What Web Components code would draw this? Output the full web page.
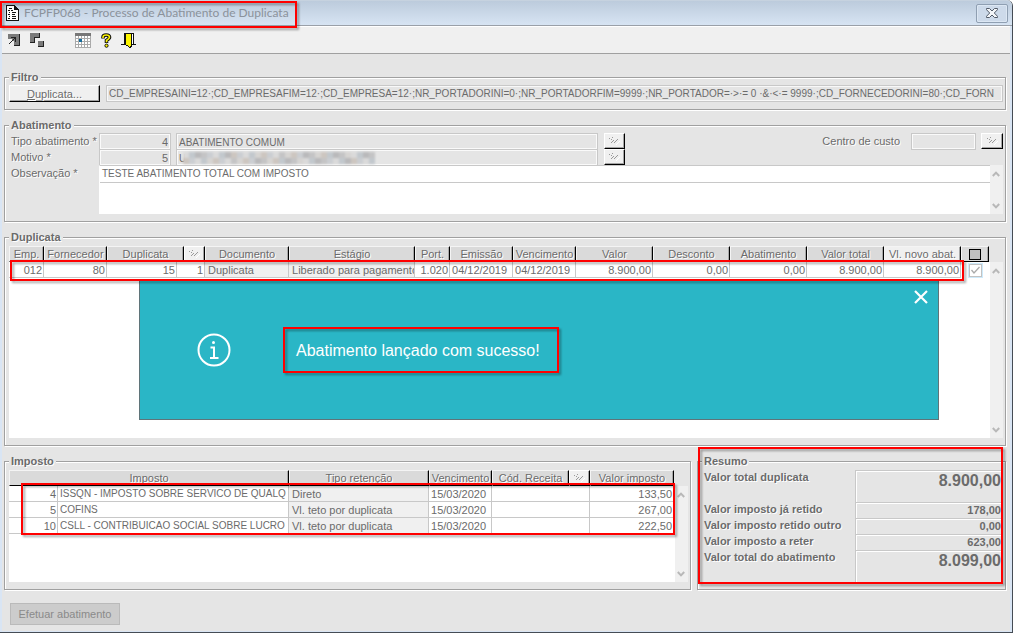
<!DOCTYPE html>
<html lang="pt-BR">
<head>
<meta charset="utf-8">
<title>FCPFP068 - Processo de Abatimento de Duplicata</title>
<style>
  body { margin: 0; background: #fff; font: 11px/13px "Liberation Sans", Arial, sans-serif; color: #6b6b6b; }
</style>
</head>
<body>
<erp-window>
  <erp-toolbar slot="toolbar"></erp-toolbar>
  <erp-group caption="Filtro"><erp-filter></erp-filter></erp-group>
  <erp-group caption="Abatimento"><erp-discount-form></erp-discount-form></erp-group>
  <erp-group caption="Duplicata">
    <erp-invoices></erp-invoices>
    <erp-toast slot="over">Abatimento lançado com sucesso!</erp-toast>
  </erp-group>
  <erp-columns>
    <erp-group caption="Imposto"><erp-taxes></erp-taxes></erp-group>
    <erp-group caption="Resumo"><erp-summary></erp-summary></erp-group>
  </erp-columns>
  <erp-action slot="footer">Efetuar abatimento</erp-action>
</erp-window>

<script>
const define = (name, html, setup) => customElements.define(name, class extends HTMLElement {
  constructor() {
    super();
    const t = document.createElement('template');
    t.innerHTML = html;
    this.attachShadow({ mode: 'open' }).append(t.content.cloneNode(true));
  }
  connectedCallback() { if (setup) setup(this, this.shadowRoot); }
});

/* Red highlight frame, laid over the nearest positioned box by the insets given to it */
define('erp-mark', `
<style>
  :host { display: block; position: absolute; box-sizing: border-box; border: 2px solid #ff0000; filter: drop-shadow(2px 2px 1px rgba(0,0,0,.35)); pointer-events: none; z-index: 3; }
</style>`);

define('erp-window', `
<style>
  :host { display: flex; flex-direction: column; box-sizing: border-box; min-height: calc(100vh - 1px); padding: 0 2px; margin-right: 2px; position: relative;
    background: #d9e5f4; border-right: 1px solid #454c55; border-radius: 0 6px 0 0; }
  header { position: relative; display: flex; align-items: center; box-sizing: border-box; height: 26px; padding: 0 4px; gap: 5px; margin: 0 -2px; border-radius: 0 6px 0 0;
    border-bottom: 1px solid #9aa0a8; background: linear-gradient(#bccbdc, #d7e4f3); border-top: 1px solid #c6d2df; }
  h1 { flex: 1; margin: 0; font: 12px/18px Lato, "Open Sans", sans-serif; color: #8b929b; white-space: nowrap; }
  header svg { margin-left: 2px; }
  .close { width: 32px; height: 19px; padding: 0; display: grid; place-items: center; border: 1px solid #8f9fb2; border-radius: 2px; background: #cddaea; box-shadow: inset 0 0 0 1px #dce7f3; }
  .close svg { margin: 0; }
  main { flex: 1; display: flex; flex-direction: column; gap: 9px; padding: 17px 4px 0 2px; background: #e5e5e5; }
  footer { padding: 4px 0 5px 6px; }
  .base { height: 2px; margin: 0 -2px; border-top: 1px solid #d9e5f4; border-bottom: 1px solid #454c55; box-sizing: border-box; }
  erp-mark { left: 0; top: 0; width: 297px; height: 27px; }
</style>
<header>
  <svg width="13" height="16" viewBox="0 0 13 16" shape-rendering="crispEdges"><path fill="#111" d="M0 0h9v1h1v1h1v1h1v1h1v12H0z"/><path fill="#fff" d="M1 1h7v4h4v10H1z"/><path stroke="#111" d="M3 3.500h3M2 5.500h2M5 5.500h2M3 7.500h1M6 7.500h4M2 9.500h2M6 9.500h3M3 11.500h1M6 11.500h4M2 13.500h2M6 13.500h4"/></svg>
  <h1>FCPFP068 - Processo de Abatimento de Duplicata</h1>
  <button class="close" aria-label="Fechar"><svg width="12" height="10" viewBox="0 0 12 10"><path d="M.5.5h3L6 3 8.500.5h3v1.200L8.300 5l3.200 3.300v1.200h-3L6 7 3.500 9.500h-3V8.300L3.700 5 .5 1.700z" fill="#f4f6f9" stroke="#525b68"/></svg></button>
  <erp-mark></erp-mark>
</header>
<slot name="toolbar"></slot>
<main><slot></slot><footer><slot name="footer"></slot></footer></main>
<div class="base"></div>`);

define('erp-toolbar', `
<style>
  :host { display: flex; align-items: center; box-sizing: border-box; height: 28px; padding: 0 3px; background: #f0f0f0; border-top: 1px solid #fff; border-bottom: 1px solid #a0a0a0; }
  button { border: 0; padding: 0; width: 18px; height: 18px; margin-right: 5px; background: none; display: grid; place-items: center; }
  .gap { width: 23px; }
</style>
<button aria-label="Selecionar"><svg width="12" height="12" viewBox="0 0 12 12" shape-rendering="crispEdges"><path fill="#7a7a7a" d="M0 0h11v11H6V7H0z"/><path fill="#222" d="M11 0h1v12H6v-1h5z"/><path fill="#f0f0f0" d="M0 5h4v2H2v2h2v2H0zM4 8h2v3H4z"/><path fill="#222" d="M3 3h5v5H7V5H6v1H5v1H4v1H3v1H2v1H1V9h1V8h1V7h1V6h1V5h1V4H3z"/></svg></button>
<button aria-label="Mover"><svg width="14" height="14" viewBox="0 0 14 14" shape-rendering="crispEdges"><path fill="#7a7a7a" d="M0 0h9v4H4v5H0zM8 8h5v5H8z"/><path fill="#222" d="M9 0h1v5H5v5H0V9h4V4h5zM13 8h1v6H8v-1h5z"/></svg></button>
<span class="gap"></span>
<button aria-label="Calendário"><svg width="16" height="15" viewBox="0 0 16 15" shape-rendering="crispEdges"><path fill="#fff" d="M0 0h16v15H0z"/><path stroke="#aaa" fill="none" d="M.5 3v12M3.500 3v12M6.500 3v12M9.500 3v12M12.500 3v12M15.500 3v12M0 5.500h16M0 8.500h16M0 11.500h16M0 14.500h16"/><path fill="#777" d="M0 0h16v3H0z"/><path fill="#146b9b" d="M4 6h3v3H4z"/></svg></button>
<button aria-label="Ajuda"><svg width="11" height="15" viewBox="0 0 11 15"><path d="M2 5.500V4.200Q2 2 5.200 2t3.300 2.200Q8.500 5.500 5.500 7.500V10" fill="none" stroke="#111" stroke-width="3.600"/><path d="M2 5V4.200Q2 2 5.200 2t3.300 2.200Q8.500 5.500 5.500 7.500V9.300" fill="none" stroke="#fdf500" stroke-width="1.600"/><circle cx="5.500" cy="12.700" r="1.600" fill="#fdf500" stroke="#111"/></svg></button>
<button aria-label="Sair"><svg width="16" height="15" viewBox="0 0 16 15" shape-rendering="crispEdges"><path fill="#111" d="M3 0h10v11h2v1h-4v2h-1v1H8v-1H7v-1H5v-1H0v-1h3z"/><path fill="#fff" d="M11 1h1v10h-1z"/><path fill="#fdf500" d="M5 1h1v1h2v1h2v10H9v1H8v-1H7v-1H5z"/><path fill="#fdf500" d="M6 1h4v2H8V2H6z"/></svg></button>`);

/* Engraved frame with its caption on the top edge */
define('erp-group', `
<style>
  :host { display: block; position: relative; min-width: 0; }
  fieldset { margin: 0; min-width: 0; border: 1px solid #a0a0a0; box-shadow: 1px 1px 0 #fff, inset 1px 1px 0 #fff; padding: 1px 2px 7px 4px; }
  legend { padding: 0 2px; font-weight: bold; background: #e5e5e5; text-shadow: 1px 1px 0 #fff; margin: 0; }
</style>
<fieldset><legend></legend><slot></slot></fieldset><slot name="over"></slot>`,
(el, root) => { root.querySelector('legend').textContent = el.getAttribute('caption'); });

define('erp-columns', `
<style>
  :host { display: grid; grid-template-columns: minmax(0, 1fr) 309px; gap: 6px; }
</style><slot></slot>`);

define('erp-lookup', `
<style>
  :host { display: block; height: 16px; }
  button { display: block; box-sizing: border-box; width: 100%; height: 100%; padding: 0; background: #f0f0f0; border: 1px solid #fff; border-right-color: #000; border-bottom-color: #000; box-shadow: inset -1px -1px 0 #a5a5a5; }
  svg { display: block; margin: auto; }
</style>
<button aria-label="Pesquisar"><svg width="11" height="9" viewBox="0 0 11 9" shape-rendering="crispEdges"><path fill="#999" d="M0 1h1v1H0zM2 2h1v1H2zM3 0h1v1H3zM8 2h1v1H8zM7 3h1v1H7zM6 4h1v1H6zM5 5h1v1H5zM4 3h1v1H4zM3 4h1v1H3zM2 5h1v1H2z"/><path fill="#fff" d="M10 4h1v1h-1zM9 5h1v1H9zM8 6h1v1H8zM7 7h1v1H7z"/></svg></button>`);

define('erp-scroll', `
<style>
  :host { display: flex; flex-direction: column; justify-content: space-between; align-items: center; box-sizing: border-box; width: 13px; padding: 6px 2px 5px 0; background: #f0f0f0; }
  svg { display: block; }
</style>
<svg width="8" height="6" viewBox="0 0 8 6"><path d="M.8 5 4 1.600 7.200 5" fill="none" stroke="#b8b8b8" stroke-width="2"/></svg>
<svg width="8" height="6" viewBox="0 0 8 6"><path d="M.8 1 4 4.400 7.200 1" fill="none" stroke="#b8b8b8" stroke-width="2"/></svg>`);

define('erp-filter', `
<style>
  :host { display: flex; gap: 6px; }
  button { width: 91px; height: 17px; padding: 0; font: inherit; line-height: 14px; color: inherit; background: #f0f0f0; border: 1px solid #fff; border-right: 1px solid #000; border-bottom: 1px solid #000; box-shadow: inset -1px -1px 0 #a0a0a0; text-shadow: 1px 1px 0 #fff; }
  input { flex: 1; min-width: 0; box-sizing: border-box; height: 17px; padding: 0 2px; border: 1px solid #c8c8c8; box-shadow: inset 0 0 0 1px #f8f8f8; background: #e5e5e5; font: 10px/13px "Liberation Sans", Arial, sans-serif; color: inherit; }
</style>
<button><u>D</u>uplicata...</button>
<input readonly aria-label="Filtro de duplicata" value="CD_EMPRESAINI=12·;CD_EMPRESAFIM=12·;CD_EMPRESA=12·;NR_PORTADORINI=0·;NR_PORTADORFIM=9999·;NR_PORTADOR=·&gt;·= 0 ·&amp;·&lt;·= 9999·;CD_FORNECEDORINI=80·;CD_FORN">`);

define('erp-discount-form', `
<style>
  :host { display: grid; grid-template-columns: 90px 72px 5px 422px 6px 21px 1fr 65px 5px 22px; grid-template-rows: 16px 16px 49px; }
  label { grid-column: 1; padding: 2px 0 0 2px; text-shadow: 1px 1px 0 #fff; white-space: nowrap; }
  input { box-sizing: border-box; min-width: 0; width: 100%; height: 16px; padding: 1px 2px 0; background: #e5e5e5; border: 1px solid #c8c8c8; border-bottom: 0; box-shadow: inset 0 0 0 1px #fafafa; font: inherit; color: inherit; }
  .num { text-align: right; grid-column: 2; }
  .caps { font-size: 10px; }
  .name { grid-column: 4; position: relative; }
  .name svg { position: absolute; left: 7px; top: 3px; filter: blur(1px); }
  erp-lookup { grid-column: 6; }
  label.cost { grid-column: 7; justify-self: end; padding-right: 11px; }
  .centre { grid-column: 8; height: 17px; border-bottom: 1px solid #c8c8c8; }
  .costlook { grid-column: 10; }
  .note { grid-column: 2 / -1; display: flex; }
  textarea { flex: 1; box-sizing: border-box; resize: none; margin: 0; padding: 1px 2px; overflow: hidden; border: 1px solid #c8c8c8; border-bottom: 0; border-right: 0; border-left-color: #fff; color: inherit; font: 10px/14px "Liberation Sans", Arial, sans-serif; background: linear-gradient(#fff 16px, #c8c8c8 16px, #c8c8c8 17px, #fff 17px); }
</style>
<label for="type">Tipo abatimento *</label><input id="type" class="num" value="4">
<div class="name"><input class="caps" aria-label="Descrição do tipo" value="ABATIMENTO COMUM"></div>
<erp-lookup></erp-lookup>
<label class="cost" for="cost">Centro de custo</label><input id="cost" class="centre"><erp-lookup class="costlook"></erp-lookup>
<label for="reason">Motivo *</label><input id="reason" class="num" value="5">
<div class="name"><input class="caps" aria-label="Descrição do motivo" value="U"><svg width="194" height="12"></svg></div>
<erp-lookup></erp-lookup>
<label for="note">Observação *</label>
<div class="note"><textarea id="note">TESTE ABATIMENTO TOTAL COM IMPOSTO</textarea><erp-scroll></erp-scroll></div>`,
(el, root) => {
  /* mosaic that hides the description of the reason */
  const tones = ['#dadada', '#c4c4c5', '#cbced2', '#b9b9bb', '#cdc6c0', '#c2c8cd', '#d6d4d2'];
  let cells = '';
  for (let i = 0; i < 32; i++) for (let j = 0; j < 2; j++)
    cells += `<rect x="${i * 6}" y="${j * 6}" width="6" height="6" fill="${tones[(i * 5 + (i >> 2) * 3 + j * 4) % 7]}"/>`;
  root.querySelector('svg').innerHTML = cells;
});

const gridStyle = `
  :host { display: flex; position: relative; padding-top: 1px; }
  .area { flex: 1; min-width: 0; background: linear-gradient(#e5e5e5 16px, #fff 16px); }
  erp-scroll { margin-top: 16px; }
  table { border-collapse: separate; border-spacing: 0; table-layout: fixed; }
  th, td { box-sizing: border-box; height: 16px; padding: 0 1px 0 2px; line-height: 14px; overflow: hidden; white-space: nowrap; font-weight: normal; }
  th { background: #dadada; border: 1px solid #f4f4f4; border-right-color: #000; border-bottom-color: #000; box-shadow: inset -1px 0 0 #a8a8a8; text-shadow: 1px 1px 0 #fff; padding: 0; }
  th.light { background: #f0f0f0; }
  th.look { border: 0; }
  td { border-right: 1px solid #c8c8c8; border-bottom: 1px solid #c8c8c8; background: #fff; text-align: right; }
  td.l { text-align: left; }
  td.g { text-align: left; background: #f0f0f0; padding-left: 3px; }
  td.caps { text-align: left; font-size: 10px; line-height: 15px; }`;
const cols = list => '<colgroup>' + list.map(w => `<col style="width:${w}px">`).join('') + '</colgroup>';

define('erp-invoices', `
<style>${gridStyle}
  .area { height: 192px; }
  table { width: 980px; }
  td.last { border: 0; text-align: center; background: none; }
  td.last input { appearance: none; display: block; margin: 0 auto; width: 13px; height: 13px; border: 1px solid #c2c2c2; outline: 1px solid #cdeafb; background: #fff url('data:image/svg+xml,<svg xmlns="http://www.w3.org/2000/svg" viewBox="0 0 11 11"><path d="M1.500 5 4 8l5.500-6" fill="none" stroke="%23aaa" stroke-width="1.300"/></svg>'); }
  th .sq { display: block; width: 10px; height: 9px; margin: 0 auto; border: 1px solid #000; background: #c0c0c0; }
  erp-mark { left: 1px; right: 39px; top: 15px; height: 21px; }
</style>
<div class="area"><table>${cols([35, 63, 70, 7, 21, 84, 126, 35, 63, 63, 77, 77, 77, 77, 77, 28])}
<thead><tr><th>Emp.</th><th>Fornecedor</th><th colspan="2">Duplicata</th><th class="look"><erp-lookup></erp-lookup></th><th>Documento</th><th>Estágio</th><th>Port.</th><th>Emissão</th><th>Vencimento</th><th>Valor</th><th>Desconto</th><th>Abatimento</th><th>Valor total</th><th class="light">Vl. novo abat.</th><th aria-label="Selecionar"><span class="sq"></span></th></tr></thead>
<tbody><tr><td>012</td><td>80</td><td>15</td><td colspan="2">1</td><td class="g">Duplicata</td><td class="g">Liberado para pagamento</td><td>1.020</td><td class="l">04/12/2019</td><td class="l">04/12/2019</td><td>8.900,00</td><td>0,00</td><td>0,00</td><td>8.900,00</td><td>8.900,00</td><td class="last"><input type="checkbox" checked aria-label="Selecionar duplicata 15"></td></tr></tbody></table></div>
<erp-scroll></erp-scroll><erp-mark></erp-mark>`);

define('erp-taxes', `
<style>${gridStyle}
  .area { height: 112px; }
  table { width: 665px; }
  erp-mark { left: 12px; right: 13px; top: 14px; height: 52px; }
</style>
<div class="area"><table>${cols([49, 231, 140, 63, 77, 21, 84])}
<thead><tr><th colspan="2">Imposto</th><th>Tipo retenção</th><th>Vencimento</th><th>Cód. Receita</th><th class="look"><erp-lookup></erp-lookup></th><th>Valor imposto</th></tr></thead>
<tbody>
<tr><td>4</td><td class="caps">ISSQN - IMPOSTO SOBRE SERVICO DE QUALQ</td><td class="g">Direto</td><td class="l">15/03/2020</td><td colspan="2"></td><td>133,50</td></tr>
<tr><td>5</td><td class="caps">COFINS</td><td class="g">Vl. teto por duplicata</td><td class="l">15/03/2020</td><td colspan="2"></td><td>267,00</td></tr>
<tr><td>10</td><td class="caps">CSLL - CONTRIBUICAO SOCIAL SOBRE LUCRO</td><td class="g">Vl. teto por duplicata</td><td class="l">15/03/2020</td><td colspan="2"></td><td>222,50</td></tr>
</tbody></table></div>
<erp-scroll></erp-scroll><erp-mark></erp-mark>`);

define('erp-summary', `
<style>
  :host { display: block; position: relative; padding-top: 1px; font-weight: bold; }
  dl { display: grid; grid-template-columns: 1fr 148px; grid-template-rows: 32px 16px 16px 16px 32px; margin: 0; }
  dt { padding: 1px 2px; text-shadow: 1px 1px 0 #fff; white-space: nowrap; }
  dd { margin: 0; padding: 1px 2px 0; line-height: 13px; text-align: right; border: 1px solid #c8c8c8; border-width: 1px 0 0 1px; box-shadow: inset 1px 1px 0 #fff; }
  dd.big { font-size: 16px; line-height: 18px; }
  erp-mark { left: -4px; right: 0; top: -22px; bottom: -2px; }
</style>
<dl>
  <dt>Valor total duplicata</dt><dd class="big">8.900,00</dd>
  <dt>Valor imposto já retido</dt><dd>178,00</dd>
  <dt>Valor imposto retido outro</dt><dd>0,00</dd>
  <dt>Valor imposto a reter</dt><dd>623,00</dd>
  <dt>Valor total do abatimento</dt><dd class="big">8.099,00</dd>
</dl>
<erp-mark></erp-mark>`);

define('erp-toast', `
<style>
  :host { display: flex; align-items: center; position: absolute; left: 135px; right: 67px; top: 49px; height: 140px; box-sizing: border-box; padding-left: 57px; gap: 52px; background: #2ab6c6; border: 1px solid #5f7479; color: #fff; z-index: 1; }
  p { position: relative; margin: 0; padding: 15px 19px 13px 13px; font-size: 16px; line-height: 18px; white-space: nowrap; }
  p erp-mark { inset: 0; }
  button { position: absolute; right: 10px; top: 9px; padding: 0; border: 0; background: none; line-height: 0; }
</style>
<svg width="34" height="34" viewBox="0 0 34 34" fill="none" stroke="#fff" stroke-width="2"><circle cx="17" cy="17" r="15.500"/><path d="M13.500 14.500H17V25M13 25h8.500"/><circle cx="16.500" cy="9.500" r="1.500" fill="#fff" stroke="none"/></svg>
<p role="status"><slot></slot><erp-mark></erp-mark></p>
<button aria-label="Fechar aviso"><svg width="14" height="14" viewBox="0 0 14 14"><path d="M1 1l12 12M13 1 1 13" stroke="#fff" stroke-width="2.200"/></svg></button>`);

define('erp-action', `
<style>
  :host { display: block; }
  button { display: block; width: 110px; height: 22px; padding: 0; border: 1px solid #bababa; background: #ccc; font: inherit; color: #8a8a8a; }
</style>
<button disabled><slot></slot></button>`);
</script>
</body>
</html>
